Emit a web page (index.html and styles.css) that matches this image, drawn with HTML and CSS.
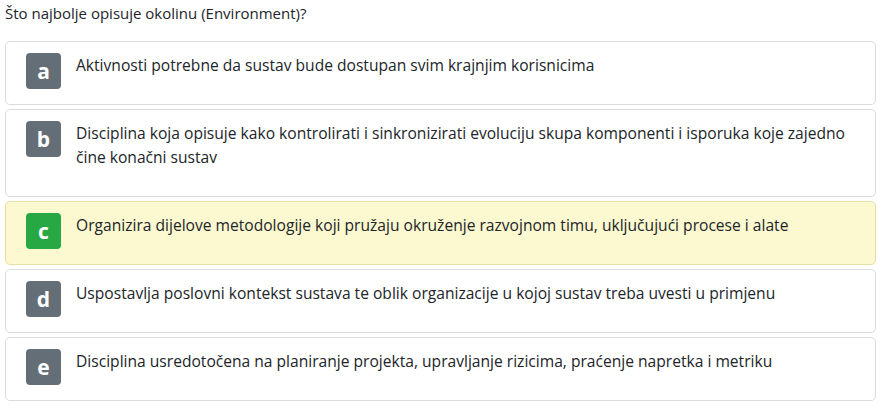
FILE: index.html
```html
<!DOCTYPE html>
<html lang="hr">
<head>
<meta charset="utf-8">
<link rel="stylesheet" href="styles.css">
</head>
<body>
<div class="quiz">
  <p class="question">Što najbolje opisuje okolinu (Environment)?</p>
  <ul class="answers">
    <li class="answer"><span class="badge">a</span><p class="text">Aktivnosti potrebne da sustav bude dostupan svim krajnjim korisnicima</p></li>
    <li class="answer"><span class="badge">b</span><p class="text">Disciplina koja opisuje kako kontrolirati i sinkronizirati evoluciju skupa komponenti i isporuka koje zajedno čine konačni sustav</p></li>
    <li class="answer correct"><span class="badge">c</span><p class="text">Organizira dijelove metodologije koji pružaju okruženje razvojnom timu, uključujući procese i alate</p></li>
    <li class="answer"><span class="badge">d</span><p class="text">Uspostavlja poslovni kontekst sustava te oblik organizacije u kojoj sustav treba uvesti u primjenu</p></li>
    <li class="answer"><span class="badge">e</span><p class="text">Disciplina usredotočena na planiranje projekta, upravljanje rizicima, praćenje napretka i metriku</p></li>
  </ul>
</div>
</body>
</html>
```
FILE: styles.css
```css
html, body {
  margin: 0;
  padding: 0;
  background: #fff;
}
body {
  font-family: "Open Sans", "Noto Sans", sans-serif;
  font-size: 15px;
  color: #212529;
}
.quiz {
  padding: 0 7px 0 5px;
}
.question {
  margin: 0;
  padding-top: 1px;
  line-height: 24px;
  height: 40px;
}
.answers {
  list-style: none;
  margin: 0;
  padding: 0;
  display: flex;
  flex-direction: column;
  gap: 4px;
}
.answer {
  display: flex;
  align-items: flex-start;
  gap: 15px;
  border: 1px solid #dcdcdc;
  border-radius: 5px;
  padding: 11px 20px;
  background: #fff;
}
.answer.correct {
  background: #fcf8cf;
  border-color: #e6dfa6;
}
.badge {
  flex: none;
  width: 35px;
  height: 36px;
  border-radius: 4px;
  background: #646e76;
  color: #fff;
  font-weight: 700;
  font-size: 21px;
  line-height: 36px;
  text-align: center;
}
.correct .badge {
  background: #28a745;
}
.text {
  margin: 0 0 16px;
  font-size: 15.6px;
  line-height: 24px;
}
```
